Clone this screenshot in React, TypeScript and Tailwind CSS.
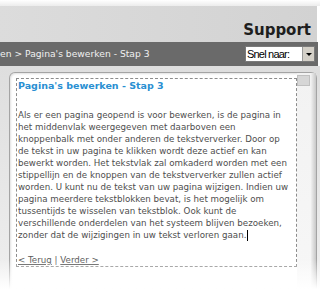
import React from "react";

const lines = [
  "Als er een pagina geopend is voor bewerken, is de pagina in",
  "het middenvlak weergegeven met daarboven een",
  "knoppenbalk met onder anderen de tekstververker. Door op",
  "de tekst in uw pagina te klikken wordt deze actief en kan",
  "bewerkt worden. Het tekstvlak zal omkaderd worden met een",
  "stippellijn en de knoppen van de tekstververker zullen actief",
  "worden. U kunt nu de tekst van uw pagina wijzigen. Indien uw",
  "pagina meerdere tekstblokken bevat, is het mogelijk om",
  "tussentijds te wisselen van tekstblok. Ook kunt de",
  "verschillende onderdelen van het systeem blijven bezoeken,",
];

export default function App() {
  return (
    <div
      className="relative w-[320px] h-[289px] overflow-hidden bg-white flex flex-col"
      style={{ fontFamily: '"DejaVu Sans", Verdana, sans-serif' }}
    >
      <div className="h-[6px] shrink-0 bg-gradient-to-b from-white to-[#ececec]" />
      <div className="h-[36px] shrink-0 bg-gradient-to-r from-[#dcdcdc] to-[#d2d2d2] flex items-end justify-end pr-[6px] pb-[3px] mr-[3px]">
        <span className="text-[15px] font-bold leading-[18px] text-[#1e1e1e]">Support</span>
      </div>
      <div className="h-[24px] shrink-0 bg-[#6a6a6a] flex items-center justify-between mr-[2px]">
        <span className="text-[9.2px] leading-[12px] text-[#f0f0f0] whitespace-nowrap">
          en &gt; Pagina's bewerken - Stap 3
        </span>
        <div className="mr-[3px] w-[70px] h-[16px] bg-white border border-[#7a7a7a] flex items-center justify-between">
          <span
            className="text-[11px] leading-[14px] text-black pl-[1px] tracking-[-0.8px]"
            style={{ fontFamily: '"Liberation Sans", Arial, sans-serif' }}
          >
            Snel naar:
          </span>
          <div className="w-[12px] h-[14px] bg-[#d4d0c8] border-l border-[#9a9a9a] flex items-center justify-center">
            <div className="w-0 h-0 border-l-[3px] border-r-[3px] border-t-[3px] border-l-transparent border-r-transparent border-t-black" />
          </div>
        </div>
      </div>
      <div className="flex-1 bg-gradient-to-b from-[#dedede] to-[#efefef] pl-[9px] pr-[3px] pt-[6px] flex">
        <div className="flex-1 flex bg-white border border-[#a4a4a4] border-b-0 rounded-t-[6px] shadow-[inset_1px_1px_2px_rgba(0,0,0,0.12)]">
          <div className="pl-[6px] pt-[5px]">
            <div className="w-[281px] h-[189px] border border-dashed border-[#8c8c8c] pl-[1px] pt-[1px]">
              <div className="text-[9.5px] font-bold leading-[12px] text-[#2a8fd2] whitespace-nowrap">
                Pagina's bewerken - Stap 3
              </div>
              <div className="mt-[17px] text-[8.7px] leading-[12px] text-[#4e4e4e] whitespace-nowrap">
                {lines.map((l) => (
                  <div key={l}>{l}</div>
                ))}
                <div className="flex items-center">
                  <span>zonder dat de wijzigingen in uw tekst verloren gaan.</span>
                  <span className="inline-block w-[1px] h-[11px] bg-black ml-[1px]" />
                </div>
              </div>
              <div className="mt-[13px] text-[8.7px] leading-[12px] text-[#5a5a5a] whitespace-nowrap">
                <span className="underline">&lt; Terug</span> | <span className="underline">Verder &gt;</span>
              </div>
            </div>
          </div>
          <div className="w-[14px] bg-gradient-to-b from-[#f2f2f2] to-[#f7f7f7] pt-[2px]">
            <div className="w-[13px] h-[11px] bg-[#d6d6d6] border border-[#c0c0c0]" />
          </div>
          <div className="flex-1 bg-gradient-to-r from-[#f0f0f0] to-[#c8c8c8]" />
        </div>
      </div>
      <div className="pointer-events-none absolute left-0 right-0 bottom-0 h-[30px] bg-gradient-to-b from-transparent to-white" />
    </div>
  );
}
